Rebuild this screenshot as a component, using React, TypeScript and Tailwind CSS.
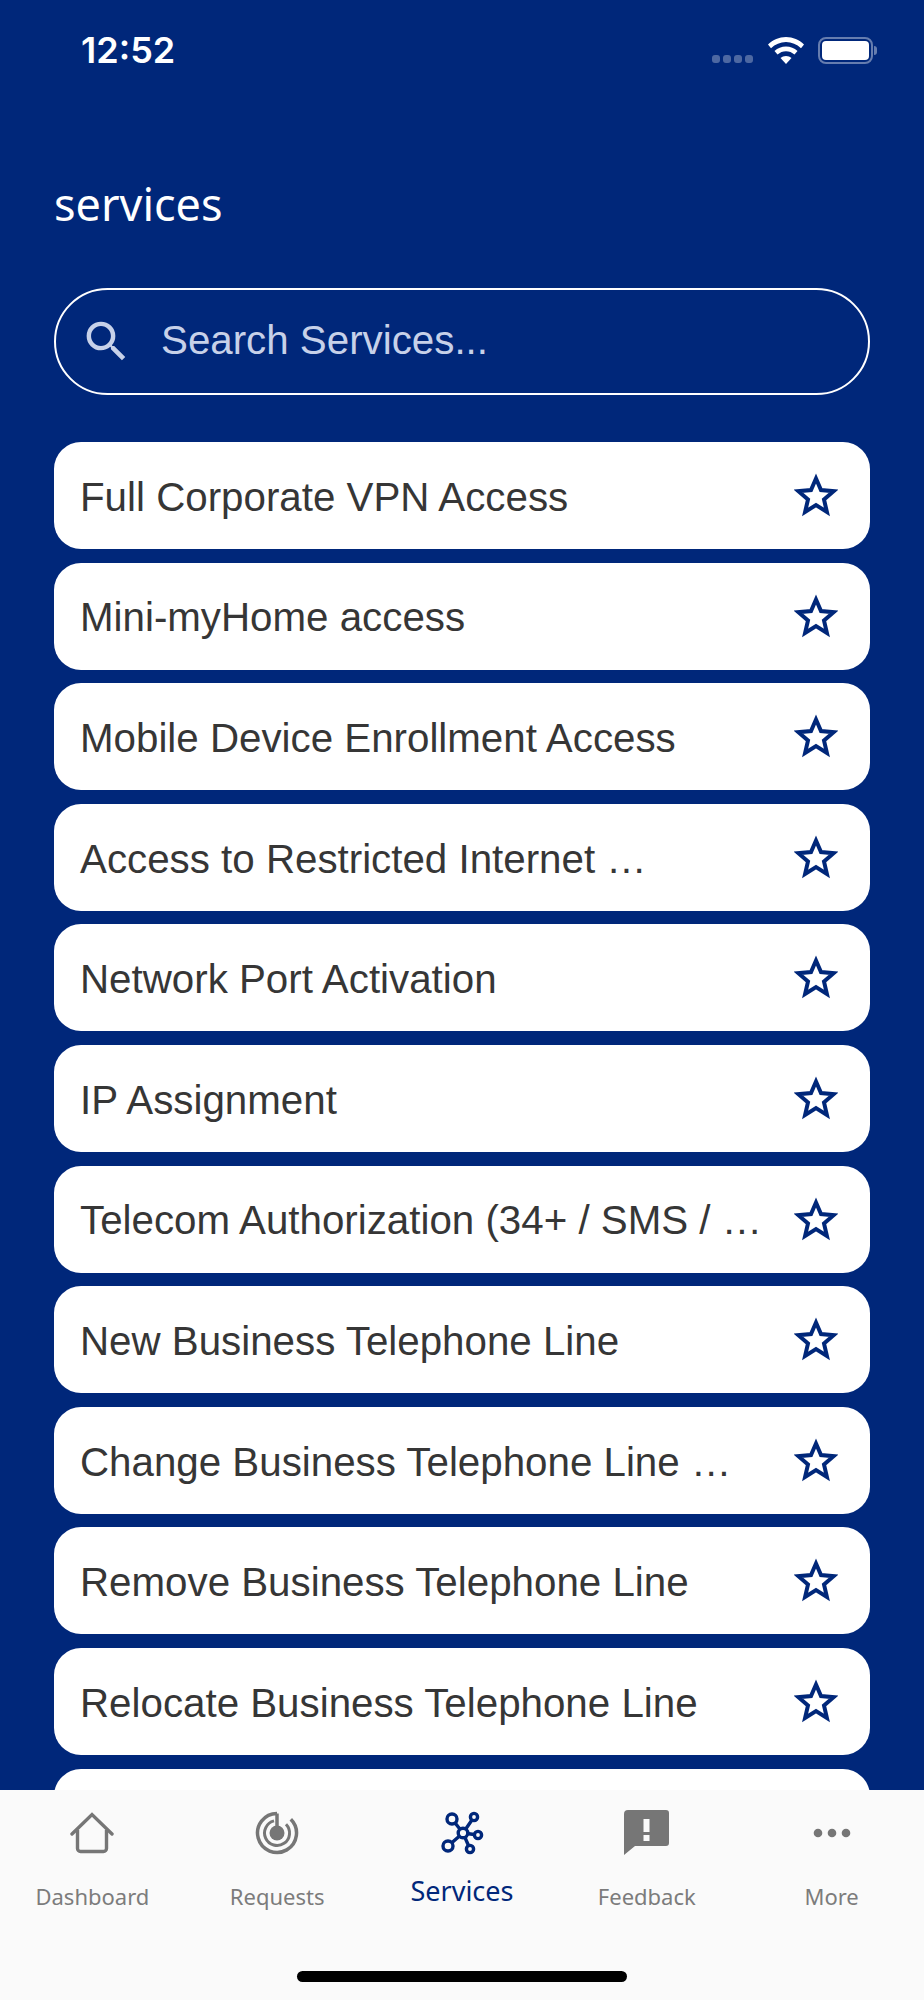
import React from "react";

const services = [
  "Full Corporate VPN Access",
  "Mini-myHome access",
  "Mobile Device Enrollment Access",
  "Access to Restricted Internet …",
  "Network Port Activation",
  "IP Assignment",
  "Telecom Authorization (34+ / SMS / …",
  "New Business Telephone Line",
  "Change Business Telephone Line …",
  "Remove Business Telephone Line",
  "Relocate Business Telephone Line",
  "",
];

function StarIcon() {
  return (
    <svg width="44" height="44" viewBox="0 0 44 44" fill="none" className="shrink-0 -mt-[1px]">
      <path
        d="M22 5.500l5 11.600 12.600 1.100-9.600 8.300 2.900 12.400L22 32l-10.900 6.900 2.900-12.400-9.600-8.300 12.600-1.100z"
        stroke="#00277a"
        strokeWidth="4"
      />
    </svg>
  );
}

function HomeIcon() {
  return (
    <svg width="44" height="42" viewBox="0 0 44 42" fill="none" stroke="#767676" strokeWidth="3.4">
      <path d="M2 22L22 2.500 42 22" strokeLinecap="round" />
      <path d="M7.500 18v18.500a3 3 0 003 3h23a3 3 0 003-3V18" />
    </svg>
  );
}

function RadarIcon() {
  return (
    <svg width="44" height="44" viewBox="0 0 44 44" fill="none" stroke="#767676" strokeWidth="3.500">
      <circle cx="22" cy="22" r="7.500" fill="#767676" stroke="none" />
      <path d="M22 2.500A19.500 19.500 0 1 0 35.800 8.200" />
      <path d="M19 9.900A12.500 12.500 0 1 0 31 13.300" strokeWidth="3" />
      <path d="M22 2.500V17" />
    </svg>
  );
}

function NetworkIcon() {
  return (
    <svg width="44" height="44" viewBox="0 0 44 44" fill="none" stroke="#00277a" strokeWidth="3.400">
      <path d="M12 8l11 14M8 35l15-13M34 6L23 22M38 24l-15-2M30 38l-7-16" />
      <circle cx="23" cy="22" r="4.800" fill="#fafafa" />
      <circle cx="12" cy="8" r="5" fill="#fafafa" />
      <circle cx="8" cy="35" r="5" fill="#fafafa" />
      <circle cx="34" cy="6" r="3.600" fill="#fafafa" />
      <circle cx="38" cy="24" r="3.600" fill="#fafafa" />
      <circle cx="30" cy="38" r="3.600" fill="#fafafa" />
    </svg>
  );
}

function FeedbackIcon() {
  return (
    <svg width="46" height="46" viewBox="0 0 46 46" fill="#767676">
      <path d="M4 0h38a3 3 0 013 3v30a3 3 0 01-3 3H11L0 45V4a4 4 0 014-4z" />
      <rect x="19.500" y="9" width="6" height="13" fill="#fafafa" />
      <rect x="19.500" y="25" width="6" height="6" fill="#fafafa" />
    </svg>
  );
}

function MoreIcon() {
  return (
    <svg width="38" height="44" viewBox="0 0 38 44" fill="#767676">
      <circle cx="5" cy="22" r="4.300" />
      <circle cx="19" cy="22" r="4.300" />
      <circle cx="33" cy="22" r="4.300" />
    </svg>
  );
}

const tabs = [
  { label: "Dashboard", icon: <HomeIcon /> },
  { label: "Requests", icon: <RadarIcon /> },
  { label: "Services", icon: <NetworkIcon />, active: true },
  { label: "Feedback", icon: <FeedbackIcon /> },
  { label: "More", icon: <MoreIcon /> },
];

export default function App() {
  return (
    <div className="w-[924px] h-[2000px] flex flex-col overflow-hidden bg-[#00277a] font-['Liberation_Sans',Arial,sans-serif]">
      <div className="flex-1 min-h-0 overflow-hidden">
        {/* status bar */}
        <div className="h-[100px] flex items-center justify-between pl-[81px] pr-[47px]">
          <span className="text-[36px] font-semibold text-white font-['Inter',sans-serif]">12:52</span>
          <div className="flex items-center">
            <div className="flex gap-[3px] mt-[17px] mr-[15px]">
              <span className="w-[8px] h-[8px] rounded-[3px] bg-white/30" />
              <span className="w-[8px] h-[8px] rounded-[3px] bg-white/30" />
              <span className="w-[8px] h-[8px] rounded-[3px] bg-white/30" />
              <span className="w-[8px] h-[8px] rounded-[3px] bg-white/30" />
            </div>
            <svg width="36" height="27" viewBox="0 0 36 27" fill="white" className="mr-[14px]">
              <path d="M18 0c7 0 13 2.800 18 7.500l-3 3.700C28.800 7.300 23.800 5 18 5S7.200 7.300 3 11.200L0 7.500C5 2.800 11 0 18 0z" />
              <path d="M18 9.500c4.500 0 8.300 1.700 11.500 4.500l-3 3.600C24 15.500 21.200 14.300 18 14.300s-6 1.200-8.500 3.300l-3-3.600C9.700 11.200 13.500 9.500 18 9.500z" />
              <path d="M18 19c2.200 0 4 .800 5.500 2L18 27l-5.500-6c1.500-1.200 3.300-2 5.500-2z" />
            </svg>
            <div className="w-[55px] h-[27px] rounded-[8px] border-2 border-white/40 p-[2px]">
              <div className="w-full h-full rounded-[4px] bg-white" />
            </div>
            <div className="w-[3px] h-[9px] rounded-r-[3px] bg-white/40 ml-[1px]" />
          </div>
        </div>

        <div className="px-[54px]">
          <h1 className="mt-[74px] h-[60px] text-[45px] leading-[60px] text-white font-['Noto_Sans',sans-serif]">
            services
          </h1>

          <div className="mt-[54px] h-[107px] rounded-full border-[2.5px] border-white flex items-center pl-[24px]">
            <svg width="53" height="53" viewBox="0 0 24 24" fill="#c7d1e9">
              <path d="M15.500 14h-.790l-.280-.270A6.470 6.470 0 0016 9.500 6.500 6.500 0 109.500 16c1.610 0 3.090-.590 4.230-1.570l.270.280v.790l5 4.990L20.490 19l-4.990-5zm-6 0C7.010 14 5 11.990 5 9.500S7.010 5 9.500 5 14 7.010 14 9.500 11.990 14 9.500 14z" />
            </svg>
            <span className="ml-[28px] text-[40.3px] text-[#c7d1e9]">Search Services...</span>
          </div>

          <div className="mt-[47px] flex flex-col gap-[13.6px]">
            {services.map((name, i) => (
              <div
                key={i}
                className="h-[107px] shrink-0 rounded-[27px] bg-white flex items-center justify-between pl-[26px] pr-[32px]"
              >
                <span className="mt-[5px] text-[40.3px] text-[#363636] whitespace-nowrap">{name}</span>
                {name && <StarIcon />}
              </div>
            ))}
          </div>
        </div>
      </div>

      {/* tab bar */}
      <div className="relative h-[210px] shrink-0 bg-[#fafafa]">
        <div className="grid grid-cols-5 pt-[21px]">
          {tabs.map((tab) => (
            <div key={tab.label} className="flex flex-col items-center">
              <div className="h-[44px] flex items-center justify-center">{tab.icon}</div>
              <span
                className={
                  tab.active
                    ? "mt-[18px] text-[27px] leading-[36px] text-[#00277a] font-['Noto_Sans',sans-serif]"
                    : "mt-[24px] text-[22px] leading-[34px] text-[#7c7c7c] font-['Noto_Sans',sans-serif]"
                }
              >
                {tab.label}
              </span>
            </div>
          ))}
        </div>
        <div className="absolute left-[297px] bottom-[18px] w-[330px] h-[11px] rounded-full bg-black" />
      </div>
    </div>
  );
}
